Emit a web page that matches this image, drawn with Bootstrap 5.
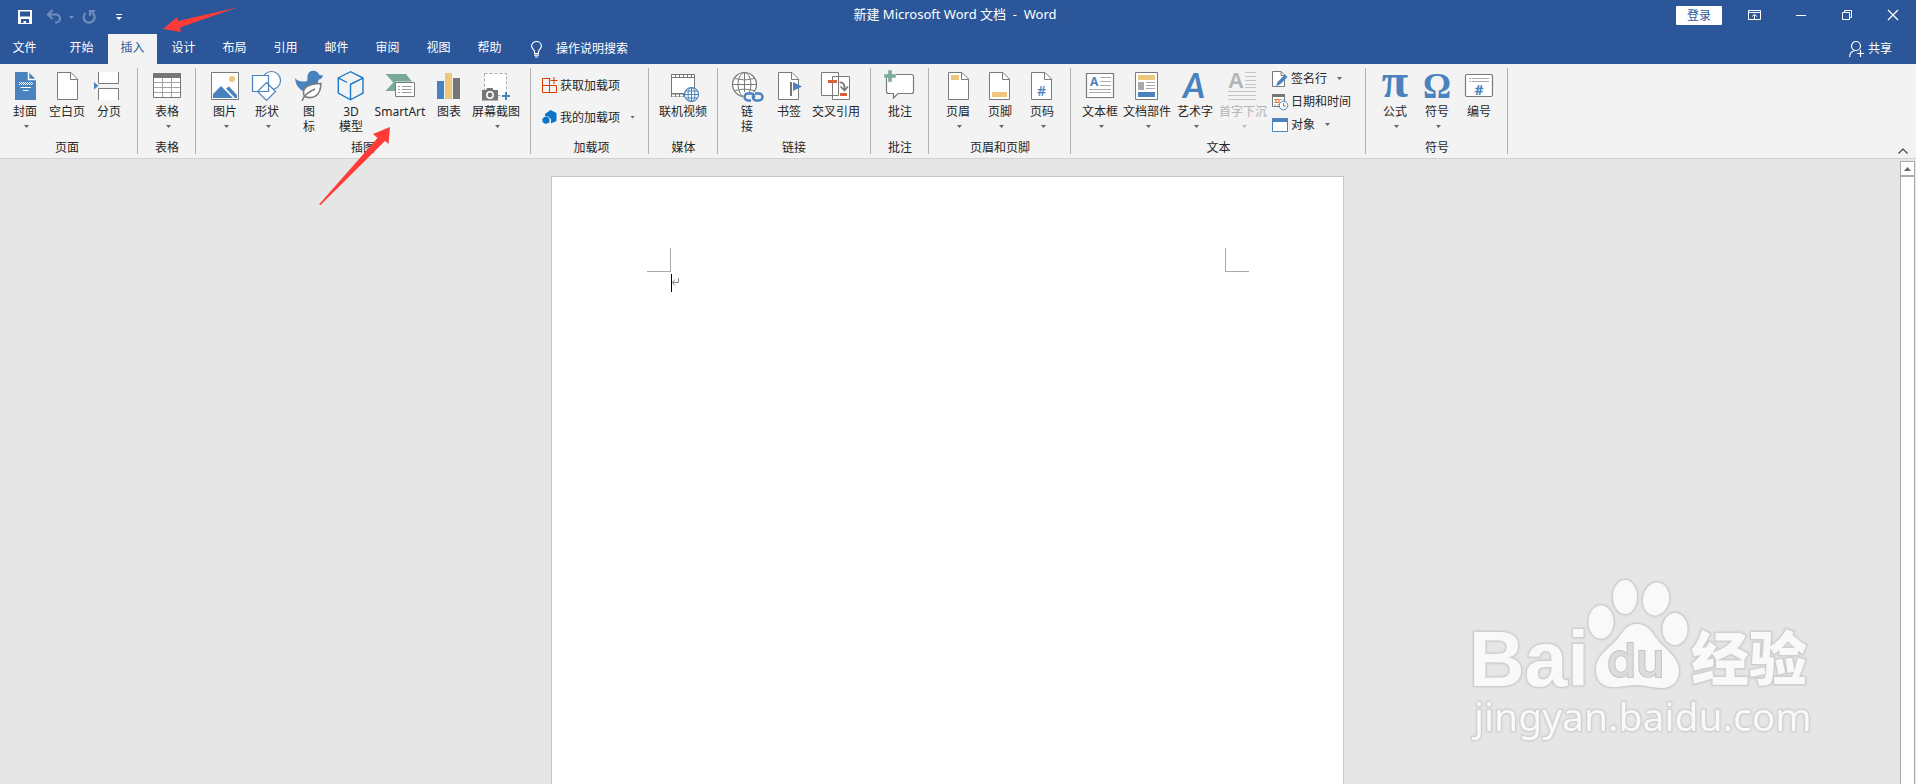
<!DOCTYPE html>
<html lang="zh-CN">
<head>
<meta charset="utf-8">
<meta name="viewport" content="width=device-width, initial-scale=1">
<title>新建 Microsoft Word 文档 - Word</title>
<link rel="stylesheet" href="https://cdn.jsdelivr.net/npm/bootstrap@5.3.0/dist/css/bootstrap.min.css">
<script src="https://cdn.jsdelivr.net/npm/bootstrap@5.3.0/dist/js/bootstrap.bundle.min.js"></script>
<style>
:root{--word:#2b579a;--ink:#262626}
body{font:12px/15px "Noto Sans","Noto Sans CJK SC",sans-serif;color:var(--ink);background:#e6e6e6}
.btn{--bs-btn-font-size:12px;--bs-btn-line-height:15px;--bs-btn-padding-x:0;--bs-btn-padding-y:0;--bs-btn-border-width:0;--bs-btn-border-radius:0;--bs-btn-color:inherit;--bs-btn-disabled-color:#b1b1b1;--bs-btn-disabled-opacity:1}
svg{display:block;flex:none;overflow:visible}
.title-bar{display:grid;grid-template-columns:1fr auto 1fr;height:34px;background:var(--word);color:#fff}
.title-text{white-space:pre;padding:6px 6px 0 0;font-size:13px;line-height:16px}
.quick{padding:0 0 0 18px;gap:15px}
.quick .btn{display:flex;align-items:center;gap:8px}
.quick .redo{margin:0 5px 0 -7px}
.faded{opacity:.32}
.win-btn{width:46px;height:30px}
.sign-in{width:46px;height:19px;margin:6px 10px 0 0;border-radius:1px;background:#fff;color:var(--word)}
.tab-bar{height:30px;background:var(--word);color:#fff}
.tab-list{column-gap:2px}
.tab-bar .nav-link{width:49px;height:30px;padding:6px 0;text-align:center;color:#fff}
.tab-bar .nav-link.active{background:#f3f3f3;color:var(--word)}
.tab-bar>.btn{height:28px}
.file-item{margin-right:6px}
.tell-me{margin-left:17px;gap:14px}
.ribbon{height:95px;background:#f3f3f3;border-bottom:1px solid #d2d2d2}
.group{height:90px;padding:0 8px;position:relative;display:flex;flex-direction:column;justify-content:space-between}
.group::after{content:"";position:absolute;right:0;top:4px;bottom:0;width:1px;background:#b1b1b1}
.group-name{text-align:center;height:15px;margin-bottom:-1px}
.tool{display:flex;flex-direction:column;align-items:center;width:42px;padding-top:7px;white-space:nowrap}
.tool.w46{width:46px}.tool.w48{width:48px}.tool.w52{width:52px}.tool.w56{width:56px}
.tool .cap{margin-top:3px}
.tool .drop{margin:6px 0 0 3px}
.drop{width:5px;height:3px;background:#666;clip-path:polygon(0 0,100% 0,50% 100%);flex:none}
:disabled .drop{background:#bbb}
.line-tool{display:flex;align-items:center;height:23px;gap:3px;white-space:nowrap}
.line-tool .drop{margin-left:7px}
.line-tool.tall{height:32px}
.line-list{padding:3px 0 0 5px}
.g-pages{padding:0 8px 0 4px}
.g-wide{padding-right:9px}
.g-text{padding:0 6px;width:295px}
.g-addins{padding:0 8px 0 11px;width:118px}
.g-addins .line-list{padding:5px 0 0}
.g-media{width:69px}
.work{min-height:0}
.canvas{padding:17px 5px 0 0;overflow:hidden}
.paper{width:793px;max-width:100%;background:#fff;border:1px solid #c6c6c6;border-bottom:0;padding:71px 94px 0 95px}
.corner{width:24px;height:24px;border-bottom:1px solid #aaa}
.corner.start{border-right:1px solid #aaa}
.corner.end{border-left:1px solid #aaa}
.text-line{margin:2px 24px 0;height:18px}
.text-caret{width:1px;height:18px;background:#000}
.scroller{width:16px;padding:2px 1px 0 0}
.scroller .up{height:15px;border:1px solid #ababab;background:#fff}
.scroller .thumb{border:1px solid #ababab;border-bottom:0;background:#fff}
.over{position:absolute;pointer-events:none}
.arrow-tab{left:163px;top:7px}
.arrow-art{left:319px;top:127px}
.watermark{right:98px;bottom:36px;filter:drop-shadow(0 0 1px #c4c4c4)}
.collapse-btn{right:8px;bottom:4px}
</style>
</head>
<body class="vh-100 d-flex flex-column overflow-hidden position-relative">
<svg width="0" height="0" class="position-absolute" aria-hidden="true">
  <symbol id="sheet" viewBox="0 0 22 29" overflow="visible"><path d="M.5.5H14L20.500 7V27.500H.5z" fill="#fff" stroke="#7a7a7a"/><path d="M13.500.5V7.500H20.500" fill="none" stroke="#7a7a7a"/></symbol>
</svg>

<header class="title-bar">
  <div class="quick d-flex">
    <button class="btn" aria-label="保存"><svg width="14" height="14"><path d="M0 0H14V14H0z" fill="#fff"/><path d="M2 1.500H12V6.500H2zM3 9H11V13H8V11H5.500V13H3z" fill="#2b579a"/></svg></button>
    <button class="btn faded" aria-label="撤消"><svg width="14" height="14" viewBox="0 0 14 14" fill="none" stroke="#fff" stroke-width="2.200"><path d="M5.500 0 1 4.500 5.500 9M1 4.500H9A4 4 0 0 1 9 12.500H8"/></svg><svg width="5" height="3"><path d="M0 0H5L2.500 3z" fill="#fff"/></svg></button>
    <button class="btn faded redo" aria-label="重复"><svg width="14" height="14" viewBox="0 0 14 14" fill="none" stroke="#fff" stroke-width="2.200"><path d="M3.500 3A5.500 5.500 0 1 0 10 2.500M13 1H8V6"/></svg></button>
    <button class="btn" aria-label="自定义快速访问工具栏"><svg width="6" height="6"><path d="M0 0H6V1H0zM0 3H6L3 6z" fill="#fff"/></svg></button>
  </div>
  <div class="title-text">新建 Microsoft Word 文档  -  Word</div>
  <div class="d-flex justify-content-end">
    <button class="btn sign-in">登录</button>
    <button class="btn win-btn d-grid" aria-label="功能区显示选项"><svg class="m-auto" width="14" height="10" fill="none" stroke="#fff"><path d="M.5.5H12.500V9.500H.5zM.5 2.500H12.500M6.500 9V4.500M4 6.500 6.500 4.300 9 6.500"/></svg></button>
    <button class="btn win-btn d-grid" aria-label="最小化"><svg class="m-auto" width="10" height="10"><path d="M0 5.500H10" stroke="#fff"/></svg></button>
    <button class="btn win-btn d-grid" aria-label="向下还原"><svg class="m-auto" width="10" height="10" fill="none" stroke="#fff"><path d="M.5 2.500H7.500V9.500H.5zM2.500 2V.5H9.500V7.500H8"/></svg></button>
    <button class="btn win-btn d-grid" aria-label="关闭"><svg class="m-auto" width="10" height="10"><path d="M0 0 10 10M10 0 0 10" stroke="#fff" stroke-width="1.300"/></svg></button>
  </div>
</header>

<nav class="tab-bar d-flex align-items-start">
  <ul class="nav flex-nowrap tab-list">
    <li class="file-item"><a class="nav-link" href="#">文件</a></li>
    <li><a class="nav-link" href="#">开始</a></li>
    <li><a class="nav-link active" href="#" aria-current="page">插入</a></li>
    <li><a class="nav-link" href="#">设计</a></li>
    <li><a class="nav-link" href="#">布局</a></li>
    <li><a class="nav-link" href="#">引用</a></li>
    <li><a class="nav-link" href="#">邮件</a></li>
    <li><a class="nav-link" href="#">审阅</a></li>
    <li><a class="nav-link" href="#">视图</a></li>
    <li><a class="nav-link" href="#">帮助</a></li>
  </ul>
  <button class="btn tell-me d-flex align-items-center"><svg width="11" height="15" fill="none" stroke="#fff" stroke-width="1.200"><path d="M3.500 12V10.500C3.500 9 .6 8 .6 5A4.900 4.500 0 0 1 10.400 5C10.400 8 7.500 9 7.500 10.500V12M3 12.500H8M3 14.200H8M4 16H7"/></svg>操作说明搜索</button>
  <button class="btn d-flex align-items-center ms-auto me-4"><svg class="me-1" width="15" height="15" fill="none" stroke="#fff" stroke-width="1.200"><circle cx="7" cy="5" r="4.500"/><path d="M.6 16C.6 12 3 10 6 9.500M11.500 9V16M8 12.500H15"/></svg>共享</button>
</nav>

<section class="ribbon d-flex position-relative" aria-label="插入">
  <div class="group g-pages">
    <div class="d-flex">
      <button class="btn tool"><svg width="32" height="30"><path d="M6 1H19.500L27 8.500V29H6z" fill="#4a82bd"/><path d="M19.500 1V8.500H27" fill="none" stroke="#fff" stroke-width="1.500"/><g stroke="#fff"><path d="M10 11.500H24M11 12.500H24M10 13.500H24" stroke-dasharray="1 1"/><path d="M11.500 16.500H22M14 19.500H19.500"/></g></svg><span class="cap">封面</span><i class="drop"></i></button>
      <button class="btn tool"><svg width="32" height="30"><use href="#sheet" x="6" y="1" width="22" height="29"/></svg><span class="cap">空白页</span></button>
      <button class="btn tool"><svg width="32" height="30"><path d="M5.500 1V12.500H25.500V1M5.500 29V17.500H25.500V29" fill="#fff" stroke="#7a7a7a"/><path d="M1 11 5.500 14.700 1 18.500z" fill="#4a82bd"/></svg><span class="cap">分页</span></button>
    </div>
    <div class="group-name">页面</div>
  </div>

  <div class="group">
    <button class="btn tool"><svg width="32" height="30"><path d="M2.500 2.500H29.500V26.500H2.500z" fill="#fff" stroke="#767676"/><path d="M2 2H30V7H2z" fill="#767676"/><path d="M11.500 7V26M20.500 7V26M3 11.500H29M3 16.500H29M3 21.500H29" stroke="#a5a5a5"/></svg><span class="cap">表格</span><i class="drop"></i></button>
    <div class="group-name">表格</div>
  </div>

  <div class="group g-wide">
    <div class="d-flex">
      <button class="btn tool"><svg width="32" height="30"><path d="M2.500 1.500H29.500V28.500H2.500z" fill="#fff" stroke="#7a7a7a"/><circle cx="23" cy="8" r="3" fill="#eec77c"/><path d="M4 27V23L12 15 24 27zM17 17.500 20 15.500 28 24V27H26z" fill="#4a82bd"/></svg><span class="cap">图片</span><i class="drop"></i></button>
      <button class="btn tool"><svg width="32" height="30" fill="#fff" stroke="#4a82bd" stroke-width="1.200"><circle cx="20.500" cy="9.500" r="9"/><path d="M1.500 4.500H17.500V20.500H1.500zM15.500 11.500 24.500 20.500 15.500 29.500 6.500 20.500z"/></svg><span class="cap">形状</span><i class="drop"></i></button>
      <button class="btn tool"><svg width="32" height="30"><path d="M2 7C5 11 10 11 14 10 15 9 14 7 14.500 5A6 6 0 0 1 26 3.500C27 4.500 28.500 4.500 30 4 29.500 7 28 8 26 8.500 23 12 28 15 22 19 16 24 3 21 2 7z" fill="#4a82bd"/><path d="M11.500 25.500C8 18 14 12.500 28 12.500 27.500 24 21 29 11.500 25.500z" fill="#fff" stroke="#7a7a7a" stroke-width="1.500"/><path d="M9 30C11 24 15 21 22 18" fill="none" stroke="#7a7a7a" stroke-width="1.500"/></svg><span class="cap">图<br>标</span></button>
      <button class="btn tool"><svg width="32" height="30" fill="none" stroke="#1979ca" stroke-width="1.400"><path d="M8 4.500 15.500.7 28 7V22L15.500 28.800 3.300 22V7L12 11.500M15.500 28.500V13.300L27.500 7.300M3.300 7 8 4.500"/></svg><span class="cap">3D<br>模型</span></button>
      <button class="btn tool w56"><svg width="32" height="30"><path d="M1.500 3H22L28 10.500H11V20H1.500L9.300 11.500z" fill="#79aa98"/><path d="M11.500 11.500H30.500V25.500H11.500z" fill="#fff" stroke="#7a7a7a"/><path d="M14 15.500H16M18 15.500H27.500M14 18.500H16M18 18.500H27.500M14 21.500H16M18 21.500H27.500" stroke="#999"/></svg><span class="cap">SmartArt</span></button>
      <button class="btn tool"><svg width="32" height="30"><path d="M4 10H11V28H4z" fill="#4a82bd"/><path d="M12 2H19V28H12z" fill="#eec77c"/><path d="M20 7H27V28H20z" fill="#767676"/></svg><span class="cap">图表</span></button>
      <button class="btn tool w52"><svg width="32" height="30"><path d="M4.500 2.500H26.500V24.500H4.500z" fill="#fff" stroke="#aaa" stroke-dasharray="3 2"/><path d="M2 19H6L7 17H12.500L13.500 19H18V29.500H2z" fill="#767676"/><circle cx="10" cy="24" r="3.200" fill="none" stroke="#fff" stroke-width="1.500"/><path d="M26 21V29M22 25H30" stroke="#4a82bd" stroke-width="2"/></svg><span class="cap">屏幕截图</span><i class="drop"></i></button>
    </div>
    <div class="group-name">插图</div>
  </div>

  <div class="group g-addins">
    <div class="line-list">
      <button class="btn line-tool tall"><svg width="15" height="16" fill="none" stroke="#d83b01"><path d="M8.500 1.500H.5V15.500H14.500V8.500H.5M7.500 1.500V15.500M12 0V7M8.500 3.500H15.500"/></svg>获取加载项</button>
      <button class="btn line-tool tall"><svg width="15" height="15" fill="#0a74c8"><path d="M3 4 8.500 0 14.500 3V11L9 13.500V9L6 6.500H3z"/><path d="M5.500 7 7.500 8.500V12.500L3.500 14 .5 12V8.500L2.500 7z"/></svg>我的加载项<i class="drop"></i></button>
    </div>
    <div class="group-name">加载项</div>
  </div>

  <div class="group g-media">
    <button class="btn tool w52"><svg width="32" height="30"><path d="M4 3H28V26H4z" fill="#767676"/><path d="M5 7H27V22H5z" fill="#fff"/><path d="M5 5H27M5 24.500H18" stroke="#fff" stroke-width="2" stroke-dasharray="3 1"/><circle cx="24.500" cy="23.500" r="7" fill="#fff" stroke="#4a82bd" stroke-width="1.200"/><path d="M24.500 16.500V30.500M17.500 23.500H31.500M18.700 20H30.300M18.700 27H30.300" stroke="#4a82bd"/><ellipse cx="24.500" cy="23.500" rx="3.500" ry="7" fill="none" stroke="#4a82bd"/></svg><span class="cap">联机视频</span></button>
    <div class="group-name">媒体</div>
  </div>

  <div class="group g-wide">
    <div class="d-flex">
      <button class="btn tool"><svg width="32" height="30" fill="none"><circle cx="13.500" cy="13.500" r="12" fill="#fff" stroke="#7a7a7a" stroke-width="1.200"/><path d="M13.500 1.500V25.500M1.500 13.500H25.500M3.500 7.500Q13.500 10.500 23.500 7.500M3.500 19.500Q13.500 16.500 23.500 19.500" stroke="#7a7a7a"/><ellipse cx="13.500" cy="13.500" rx="6.500" ry="12" stroke="#7a7a7a"/><path d="M12 21H32V31H12z" fill="#f3f3f3"/><g stroke="#4a82bd" stroke-width="2.500"><path d="M20 29.500H17A3.500 3.500 0 0 1 17 22.500H20Q23.500 23 23 27"/><path d="M24 22.500H28A3.500 3.500 0 0 1 28 29.500H25Q21.500 29 22 25"/></g></svg><span class="cap">链<br>接</span></button>
      <button class="btn tool"><svg width="32" height="30"><use href="#sheet" x="5" y="1" width="22" height="29"/><path d="M17 11H19V25H17z" fill="#767676"/><path d="M20 11 29 15.500 20 20z" fill="#4a82bd"/></svg><span class="cap">书签</span></button>
      <button class="btn tool w52"><svg width="32" height="30"><path d="M12.500 5.500H29.500V28.500H12.500zM1.500 1.500H18.500V24.500H1.500z" fill="#fff" stroke="#7a7a7a"/><path d="M8 9H17V12H8zM20 22H27V25H20z" fill="#d9603b"/><path d="M19.500 11.500Q25 11 24.500 18M20.500 15.500 24.500 19.500 28 15.500" fill="none" stroke="#767676" stroke-width="1.700"/></svg><span class="cap">交叉引用</span></button>
    </div>
    <div class="group-name">链接</div>
  </div>

  <div class="group">
    <button class="btn tool"><svg width="32" height="30"><path d="M4.500 3.500H27.500Q29.500 3.500 29.500 5.500V20.500Q29.500 22.500 27.500 22.500H14L9.500 27V22.500H4.500Q2.500 22.500 2.500 20.500V5.500Q2.500 3.500 4.500 3.500z" fill="#fff" stroke="#7a7a7a" stroke-width="1.200"/><path d="M4-1H8V3H12V7H8V11H4V7H0V3H4z" fill="#79aa98" stroke="#f3f3f3" stroke-width=".5"/></svg><span class="cap">批注</span></button>
    <div class="group-name">批注</div>
  </div>

  <div class="group">
    <div class="d-flex">
      <button class="btn tool"><svg width="32" height="30"><use href="#sheet" x="6" y="1" width="22" height="29"/><path d="M9 4H17V9H9z" fill="#eec77c"/></svg><span class="cap">页眉</span><i class="drop"></i></button>
      <button class="btn tool"><svg width="32" height="30"><use href="#sheet" x="5" y="1" width="22" height="29"/><path d="M8 21H23V26H8z" fill="#eec77c"/></svg><span class="cap">页脚</span><i class="drop"></i></button>
      <button class="btn tool"><svg width="32" height="30"><use href="#sheet" x="5" y="1" width="22" height="29"/><text x="15.500" y="25" text-anchor="middle" font-family="Open Sans,sans-serif" font-weight="600" font-size="14" fill="#4a82bd">#</text></svg><span class="cap">页码</span><i class="drop"></i></button>
    </div>
    <div class="group-name">页眉和页脚</div>
  </div>

  <div class="group g-text">
    <div class="d-flex">
      <button class="btn tool w46"><svg width="32" height="30"><path d="M2.500 2.500H29.500V26.500H2.500z" fill="#fff" stroke="#7a7a7a" stroke-width="1.200"/><text x="6" y="15" font-family="Open Sans,sans-serif" font-weight="700" font-size="12" fill="#4a82bd">A</text><path d="M16 6.500H27M16 10.500H27M16 14.500H27M5 18.500H27M5 21.500H27" stroke="#aaa"/></svg><span class="cap">文本框</span><i class="drop"></i></button>
      <button class="btn tool w48"><svg width="32" height="30"><path d="M4.500 1.500H26.500V28.500H4.500z" fill="#fff" stroke="#7a7a7a"/><path d="M7 4H24V9H7z" fill="#eec77c"/><path d="M7 11H13V19H7z" fill="#aaa"/><path d="M15 11.500H24M15 14.500H24M15 17.500H24" stroke="#aaa"/><path d="M7 21H24V26H7z" fill="#4a82bd"/></svg><span class="cap">文档部件</span><i class="drop"></i></button>
      <button class="btn tool w48"><svg width="32" height="30"><text x="15" y="27" text-anchor="middle" font-family="Lato,sans-serif" font-style="italic" font-weight="700" font-size="34" fill="#4a82bd">A</text></svg><span class="cap">艺术字</span><i class="drop"></i></button>
      <button class="btn tool w48" disabled><svg width="32" height="30"><text x="1" y="17" font-family="Liberation Sans,sans-serif" font-weight="700" font-size="22" fill="#b5b5b5">A</text><path d="M18 1.500H29M18 5.500H29M18 9.500H29M18 13.500H29M18 16.500H29M1 20.500H29M1 24.500H29M1 28.500H29" stroke="#c4c4c4"/></svg><span class="cap">首字下沉</span><i class="drop"></i></button>
      <div class="line-list">
        <button class="btn line-tool"><svg width="16" height="16"><path d="M.5.5H9L12.500 4V15.500H.5z" fill="#fff" stroke="#7a7a7a"/><path d="M9 .5V4.500H12" fill="none" stroke="#7a7a7a"/><path d="M4 15 5.500 11 13 3.500 15.500 6 8 13.500z" fill="#4a82bd"/></svg>签名行<i class="drop"></i></button>
        <button class="btn line-tool"><svg width="16" height="16"><path d="M.5.5H12.500V12.500H.5z" fill="#fff" stroke="#767676"/><path d="M0 0H13V3H0z" fill="#767676"/><path d="M2 5.500H12M2 8.500H12M2 11H8" stroke="#aaa" stroke-dasharray="2 1"/><path d="M4 5.500H7V8.500H4z" fill="#fff" stroke="#e8762d" stroke-width="1.200"/><circle cx="11.500" cy="11.500" r="4.300" fill="#fff" stroke="#4a82bd"/><path d="M11.500 9V12H14" fill="none" stroke="#767676"/></svg>日期和时间</button>
        <button class="btn line-tool"><svg width="16" height="14"><path d="M.5.5H15.500V13.500H.5z" fill="#fff" stroke="#4a82bd"/><path d="M0 0H16V4H0z" fill="#4a82bd"/></svg>对象<i class="drop"></i></button>
      </div>
    </div>
    <div class="group-name">文本</div>
  </div>

  <div class="group">
    <div class="d-flex">
      <button class="btn tool"><svg width="32" height="30"><text x="16" y="26" text-anchor="middle" font-family="Liberation Serif,serif" font-weight="700" font-size="48" fill="#4a82bd">π</text></svg><span class="cap">公式</span><i class="drop"></i></button>
      <button class="btn tool"><svg width="32" height="30"><text x="16" y="27" text-anchor="middle" font-family="Liberation Serif,serif" font-weight="700" font-size="35" fill="#4a82bd">Ω</text></svg><span class="cap">符号</span><i class="drop"></i></button>
      <button class="btn tool"><svg width="32" height="30"><rect x="2.500" y="3.500" width="27" height="22" rx="1.500" fill="#fff" stroke="#7a7a7a" stroke-width="1.200"/><path d="M6 7.500H8M9 7.500H26M6 10.500H8M9 10.500H26" stroke="#aaa"/><text x="16" y="23.500" text-anchor="middle" font-family="Open Sans,sans-serif" font-weight="700" font-size="14" fill="#4a82bd">#</text></svg><span class="cap">编号</span></button>
    </div>
    <div class="group-name">符号</div>
  </div>

  <button class="btn position-absolute collapse-btn" aria-label="折叠功能区"><svg width="10" height="6"><path d="M.5 5.500 5 1 9.500 5.500" fill="none" stroke="#444" stroke-width="1.200"/></svg></button>
</section>

<main class="work d-flex flex-fill position-relative">
  <div class="canvas d-flex justify-content-center flex-fill">
    <article class="paper">
      <div class="d-flex justify-content-between"><span class="corner start"></span><span class="corner end"></span></div>
      <div class="text-line d-flex"><span class="text-caret"></span><svg class="mt-1" width="8" height="8" fill="none" stroke="#888"><path d="M6.500 0V4.500H0M3 1.500 .5 4.500 3 7.500"/></svg></div>
    </article>
  </div>
  <div class="scroller d-flex flex-column">
    <button class="btn up d-grid" aria-label="向上滚动"><svg class="m-auto" width="7" height="4"><path d="M0 4 3.500 0 7 4z" fill="#666"/></svg></button>
    <div class="thumb flex-fill"></div>
  </div>
  <svg class="over watermark" width="350" height="176" viewBox="1468 572 350 176" fill="#f9f9f9" stroke="#cfcfcf" stroke-width="2" paint-order="stroke">
    <text x="1469" y="686" font-family="Liberation Sans,sans-serif" font-weight="700" font-size="77">Bai</text>
    <ellipse cx="1601" cy="622" rx="12.500" ry="16.500"/><ellipse cx="1625" cy="597" rx="12" ry="17"/><ellipse cx="1656" cy="599" rx="13" ry="16.500" transform="rotate(10 1656 599)"/><ellipse cx="1675" cy="629" rx="12.500" ry="16"/>
    <path d="M1637 624C1628 624 1624 630 1619 637C1613 646 1596 654 1596 670C1596 682 1604 687 1613 687C1622 687 1628 685 1638 685C1646 685 1652 688 1662 688C1672 688 1679 681 1679 671C1679 657 1664 649 1656 638C1651 631 1647 624 1637 624z"/>
    <text x="1607" y="677" font-family="Inter,sans-serif" font-weight="500" font-size="47" fill="#dcdcdc" stroke="#c4c4c4">du</text>
    <text x="1691" y="680" font-family="Noto Sans CJK SC,sans-serif" font-weight="900" font-size="58">经验</text>
    <text x="1474" y="731" font-family="Noto Sans,sans-serif" font-weight="400" font-size="39" stroke-width="1.500">jingyan.baidu.com</text>
  </svg>
</main>

<svg class="over arrow-tab" width="75" height="26" fill="#ff3b38"><path d="M0 22 14 10.300 15 14 75 .3 17 20.500 18 25z"/></svg>
<svg class="over arrow-art" width="72" height="78" fill="#ff3b38"><path d="M71 0 54 7 58.500 11 0 77.500 1.500 78 66 14 69.500 17z"/></svg>
</body>
</html>
